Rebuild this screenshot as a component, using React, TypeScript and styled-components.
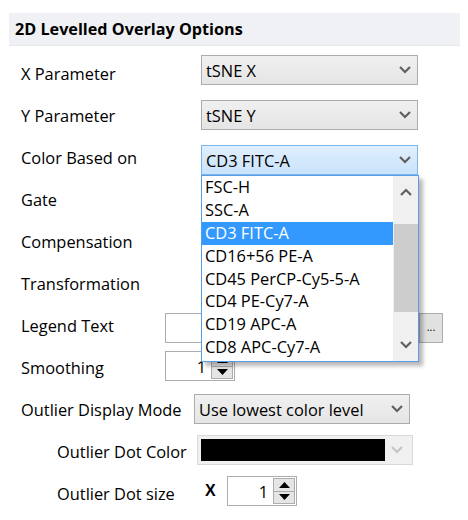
import React, { FC } from 'react';
import styled, { createGlobalStyle, css } from 'styled-components';

const GlobalStyle = createGlobalStyle`
  html, body {
    margin: 0;
    padding: 0;
    background: #ffffff;
  }
  body {
    font-family: 'Open Sans', 'Noto Sans', sans-serif;
    font-size: 16.4px;
    color: #000;
  }
`;

const Panel = styled.div`
  width: 468px;
  height: 520px;
  padding-top: 13px;
  box-sizing: border-box;
  overflow: hidden;
`;

const Header = styled.div`
  margin: 0 8px 0 9px;
  height: 32px;
  background: #f0f1f5;
  display: flex;
  align-items: center;
  padding-left: 6px;
  font-weight: 700;
  font-size: 16.2px;
  border-bottom: 1px solid #e6e7eb;
`;

const Form = styled.div`
  display: flex;
  flex-direction: column;
  padding-top: 6px;
`;

const Row = styled.div<{ $indent?: number }>`
  display: flex;
  align-items: center;
  height: 42px;
  padding-left: ${(p) => p.$indent ?? 21}px;
`;

const Label = styled.div<{ $w: number }>`
  width: ${(p) => p.$w}px;
  flex: none;
  white-space: nowrap;
`;

const Control = styled.div<{ $dy?: number }>`
  position: relative;
  margin-top: ${(p) => (p.$dy ?? 0) * 2}px;
  display: flex;
  align-items: center;
`;

const SelectBox = styled.div<{ $w: number; $focus?: boolean; $disabled?: boolean }>`
  width: ${(p) => p.$w}px;
  height: 30px;
  box-sizing: border-box;
  border: 1px solid #acacac;
  background: linear-gradient(#f0f0f0, #e5e5e5);
  display: flex;
  align-items: center;
  padding-left: 4px;
  ${(p) =>
    p.$focus &&
    css`
      border-color: #7eb4ea;
      background: linear-gradient(#e0effd, #c9e3fc);
    `}
  ${(p) =>
    p.$disabled &&
    css`
      border-color: #d9d9d9;
      background: #f0f0f0;
      padding: 3px;
    `}
`;

const SelectText = styled.span`
  flex: 1;
  white-space: nowrap;
  overflow: hidden;
`;

const ArrowCell = styled.span`
  width: 24px;
  flex: none;
  display: flex;
  justify-content: center;
  align-items: center;
`;

const Swatch = styled.div`
  flex: 1;
  height: 22px;
  background: #000;
`;

const Chevron: FC<{ up?: boolean; color?: string }> = ({ up, color = '#606060' }) => (
  <svg width="12" height="8" viewBox="0 0 12 8">
    <polyline
      points={up ? '1,7 6,2 11,7' : '1,1 6,6 11,1'}
      fill="none"
      stroke={color}
      strokeWidth="2.2"
    />
  </svg>
);

const DropList = styled.div`
  position: absolute;
  top: 30px;
  left: 0;
  width: 218px;
  height: 187px;
  box-sizing: border-box;
  border: 1px solid #569de5;
  background: #fff;
  box-shadow: 4px 4px 4px rgba(0, 0, 0, 0.28);
  display: flex;
  z-index: 10;
`;

const Items = styled.div`
  flex: 1;
  display: flex;
  flex-direction: column;
`;

const Item = styled.div<{ $active?: boolean }>`
  height: 22.9px;
  line-height: 22.9px;
  padding-left: 3px;
  white-space: nowrap;
  ${(p) =>
    p.$active &&
    css`
      background: #3399ff;
      color: #fff;
    `}
`;

const ScrollBar = styled.div`
  width: 25px;
  background: #f0f0f0;
  display: flex;
  flex-direction: column;
  align-items: stretch;
`;

const ScrollArrow = styled.div`
  height: 32px;
  display: flex;
  align-items: center;
  justify-content: center;
`;

const ScrollTrack = styled.div`
  flex: 1;
  display: flex;
  flex-direction: column;
  padding: 16px 0 0 1px;
`;

const Thumb = styled.div`
  height: 88px;
  background: #cdcdcd;
`;

const TextBox = styled.div<{ $w: number }>`
  width: ${(p) => p.$w}px;
  height: 30px;
  box-sizing: border-box;
  border: 1px solid #abadb3;
  background: #fff;
`;

const DotsButton = styled.div`
  width: 24px;
  height: 30px;
  box-sizing: border-box;
  border: 1px solid #adadad;
  background: #e1e1e1;
  display: flex;
  align-items: center;
  justify-content: center;
  font-size: 11px;
  line-height: 1;
  padding-bottom: 4px;
`;

const Spinner = styled.div`
  width: 70px;
  height: 30px;
  box-sizing: border-box;
  border: 1px solid #abadb3;
  background: #fff;
  display: flex;
  align-items: center;
`;

const SpinValue = styled.span`
  flex: 1;
  text-align: right;
  padding-right: 5px;
`;

const SpinButtons = styled.div`
  width: 22px;
  height: 26px;
  margin-right: 1px;
  display: flex;
  flex-direction: column;
`;

const SpinButton = styled.div`
  flex: 1;
  box-sizing: border-box;
  border: 1px solid #adadad;
  background: #e5e5e5;
  display: flex;
  align-items: center;
  justify-content: center;
  & + & {
    border-top: none;
  }
`;

const Triangle: FC<{ up?: boolean }> = ({ up }) => (
  <svg width="11" height="6" viewBox="0 0 11 6">
    <polygon points={up ? '0,6 5.5,0 11,6' : '0,0 5.5,6 11,0'} fill="#000" />
  </svg>
);

const TimesMark = styled.span`
  font-family: 'Liberation Sans', Arial, sans-serif;
  font-weight: 700;
  font-size: 16px;
  width: 22px;
  margin-left: 8px;
`;

const options = [
  'FSC-H',
  'SSC-A',
  'CD3 FITC-A',
  'CD16+56 PE-A',
  'CD45 PerCP-Cy5-5-A',
  'CD4 PE-Cy7-A',
  'CD19 APC-A',
  'CD8 APC-Cy7-A',
];

const Select: FC<{ value?: string; w?: number; focus?: boolean }> = ({ value = '', w = 217, focus }) => (
  <SelectBox $w={w} $focus={focus}>
    <SelectText>{value}</SelectText>
    <ArrowCell>
      <Chevron />
    </ArrowCell>
  </SelectBox>
);

const SpinBox: FC<{ value: number }> = ({ value }) => (
  <Spinner>
    <SpinValue>{value}</SpinValue>
    <SpinButtons>
      <SpinButton>
        <Triangle up />
      </SpinButton>
      <SpinButton>
        <Triangle />
      </SpinButton>
    </SpinButtons>
  </Spinner>
);

export default function App() {
  return (
    <>
      <GlobalStyle />
      <Panel>
        <Header>2D Levelled Overlay Options</Header>
        <Form>
          <Row>
            <Label $w={180}>X Parameter</Label>
            <Control $dy={-3}>
              <Select value="tSNE X" />
            </Control>
          </Row>
          <Row>
            <Label $w={180}>Y Parameter</Label>
            <Control>
              <Select value="tSNE Y" />
            </Control>
          </Row>
          <Row style={{ position: 'relative', zIndex: 5 }}>
            <Label $w={180}>Color Based on</Label>
            <Control $dy={3}>
              <Select value="CD3 FITC-A" focus />
              <DropList>
                <Items>
                  {options.map((o) => (
                    <Item key={o} $active={o === 'CD3 FITC-A'}>
                      {o}
                    </Item>
                  ))}
                </Items>
                <ScrollBar>
                  <ScrollArrow>
                    <Chevron up />
                  </ScrollArrow>
                  <ScrollTrack>
                    <Thumb />
                  </ScrollTrack>
                  <ScrollArrow>
                    <Chevron />
                  </ScrollArrow>
                </ScrollBar>
              </DropList>
            </Control>
          </Row>
          <Row>
            <Label $w={180}>Gate</Label>
            <Control>
              <Select />
            </Control>
          </Row>
          <Row>
            <Label $w={180}>Compensation</Label>
            <Control>
              <Select />
            </Control>
          </Row>
          <Row>
            <Label $w={180}>Transformation</Label>
            <Control>
              <Select />
            </Control>
          </Row>
          <Row>
            <Label $w={144}>Legend Text</Label>
            <Control $dy={3}>
              <TextBox $w={254} />
              <DotsButton>...</DotsButton>
            </Control>
          </Row>
          <Row>
            <Label $w={144}>Smoothing</Label>
            <Control $dy={-1}>
              <SpinBox value={1} />
            </Control>
          </Row>
          <Row>
            <Label $w={173}>Outlier Display Mode</Label>
            <Control>
              <Select value="Use lowest color level" w={216} />
            </Control>
          </Row>
          <Row $indent={57}>
            <Label $w={140}>Outlier Dot Color</Label>
            <Control $dy={-1}>
              <SelectBox $w={216} $disabled>
                <Swatch />
                <ArrowCell>
                  <Chevron color="#c4c4c4" />
                </ArrowCell>
              </SelectBox>
            </Control>
          </Row>
          <Row $indent={57}>
            <Label $w={140}>Outlier Dot size</Label>
            <Control $dy={-2}>
              <TimesMark>X</TimesMark>
              <SpinBox value={1} />
            </Control>
          </Row>
        </Form>
      </Panel>
    </>
  );
}
